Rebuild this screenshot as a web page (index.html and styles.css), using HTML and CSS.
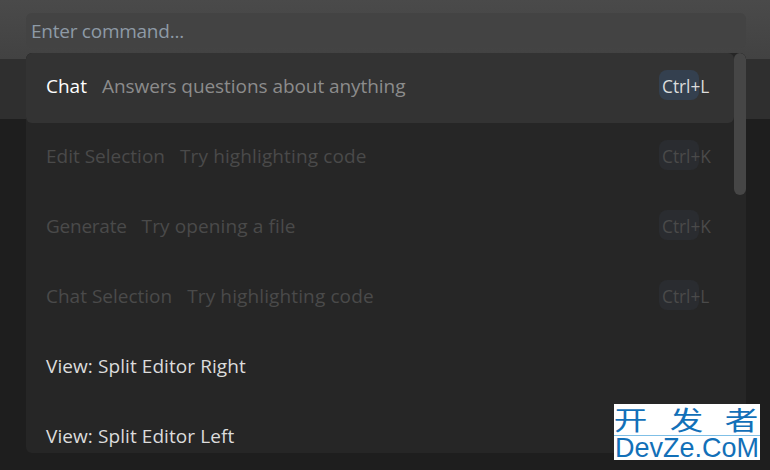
FILE: index.html
```html
<!DOCTYPE html>
<html lang="en">
<head>
<meta charset="utf-8">
<title>Command palette</title>
<link rel="stylesheet" href="styles.css">
</head>
<body>
<div class="backdrop">
  <div class="top-band"></div>
  <div class="editor-band"></div>
</div>
<div class="palette">
  <div class="input">Enter command...</div>
  <div class="list">
    <div class="scrollbar"></div>
    <div class="row active">
      <span class="name">Chat</span><span class="hint">Answers questions about anything</span>
      <span class="key">Ctrl+L</span>
    </div>
    <div class="row disabled">
      <span class="name">Edit Selection</span><span class="hint">Try highlighting code</span>
      <span class="key">Ctrl+K</span>
    </div>
    <div class="row disabled">
      <span class="name tight">Generate</span><span class="hint">Try opening a file</span>
      <span class="key">Ctrl+K</span>
    </div>
    <div class="row disabled">
      <span class="name">Chat Selection</span><span class="hint">Try highlighting code</span>
      <span class="key">Ctrl+L</span>
    </div>
    <div class="row">
      <span class="name">View: Split Editor Right</span>
    </div>
    <div class="row">
      <span class="name">View: Split Editor Left</span>
    </div>
  </div>
</div>
<div class="watermark">
  <div class="wm-cn"><span>开</span><span>发</span><span>者</span></div>
  <div class="wm-en"><span>DevZe.CoM</span></div>
</div>
</body>
</html>
```
FILE: styles.css
```css
* { box-sizing: border-box; }
html, body { margin: 0; height: 100%; }
body {
  width: 770px;
  height: 470px;
  overflow: hidden;
  position: relative;
  background: #1e1e1e;
  font-family: "Open Sans", "Noto Sans", sans-serif;
  font-size: 19px;
}
.backdrop { display: flex; flex-direction: column; height: 120px; }
.top-band { height: 59px; background: linear-gradient(#4a4a4a, #424242); }
.editor-band { height: 60px; background: #2f2f2f; }
.palette {
  position: absolute;
  left: 26px;
  top: 13px;
  width: 720px;
  display: flex;
  flex-direction: column;
  gap: 5px;
}
.input {
  height: 35px;
  padding-left: 5px;
  line-height: 37px;
  border-radius: 6px;
  background: #434343;
  color: #8e9aa6;
  letter-spacing: -0.25px;
}
.list {
  position: relative;
  height: 400px;
  overflow: hidden;
  background: #262626;
  border-radius: 6px;
}
.scrollbar {
  position: absolute;
  top: 0;
  right: 0;
  width: 12px;
  height: 142px;
  background: #464646;
  border-radius: 6px;
}
.row {
  height: 70px;
  flex: none;
  display: flex;
  align-items: center;
  padding: 0 37px 4px 20px;
  color: #dcdcdc;
}
.row.active {
  margin-right: 12px;
  padding-right: 25px;
  background: #333333;
  border-radius: 6px;
}
.row.active .name { color: #ffffff; }
.name { letter-spacing: 0.08px; }
.hint { margin-left: 15px; color: #8c8c8c; letter-spacing: -0.06px; }
.row.active .name, .row.disabled .name { letter-spacing: 0; }
.row.disabled .name.tight { letter-spacing: -0.25px; }
.row.disabled .hint { letter-spacing: 0.12px; }
.key {
  margin-left: auto;
  height: 30px;
  line-height: 34px;
  width: 40px;
  padding-left: 3px;
  white-space: nowrap;
  border-radius: 8px;
  background: #34404f;
  color: #dcdcdc;
  font-size: 17.3px;
  margin-right: 10px;
  margin-bottom: 2px;
}
.row.disabled .name, .row.disabled .hint, .row.disabled .key { color: #4a4a4a; }
.row.disabled .key { background: #2a2c30; }
.watermark {
  position: absolute;
  left: 614px;
  top: 404px;
  width: 146px;
  height: 56px;
  background: #ffffff;
  color: #1270b8;
}
.wm-cn {
  height: 32px;
  display: flex;
  justify-content: space-between;
  padding: 0 8px 0 6px;
  border-bottom: 1px solid #7fbfe6;
  font-family: "Noto Sans CJK SC", sans-serif;
  font-size: 21px;
  line-height: 31px;
}
.wm-cn span { display: block; transform: scale(1.6, 1.22); }
.wm-en {
  font-family: "Liberation Sans", sans-serif;
  font-size: 20px;
  line-height: 24px;
  white-space: nowrap;
  padding-left: 1px;
}
.wm-en span { display: inline-block; transform: scale(1.35); transform-origin: left center; }
```
